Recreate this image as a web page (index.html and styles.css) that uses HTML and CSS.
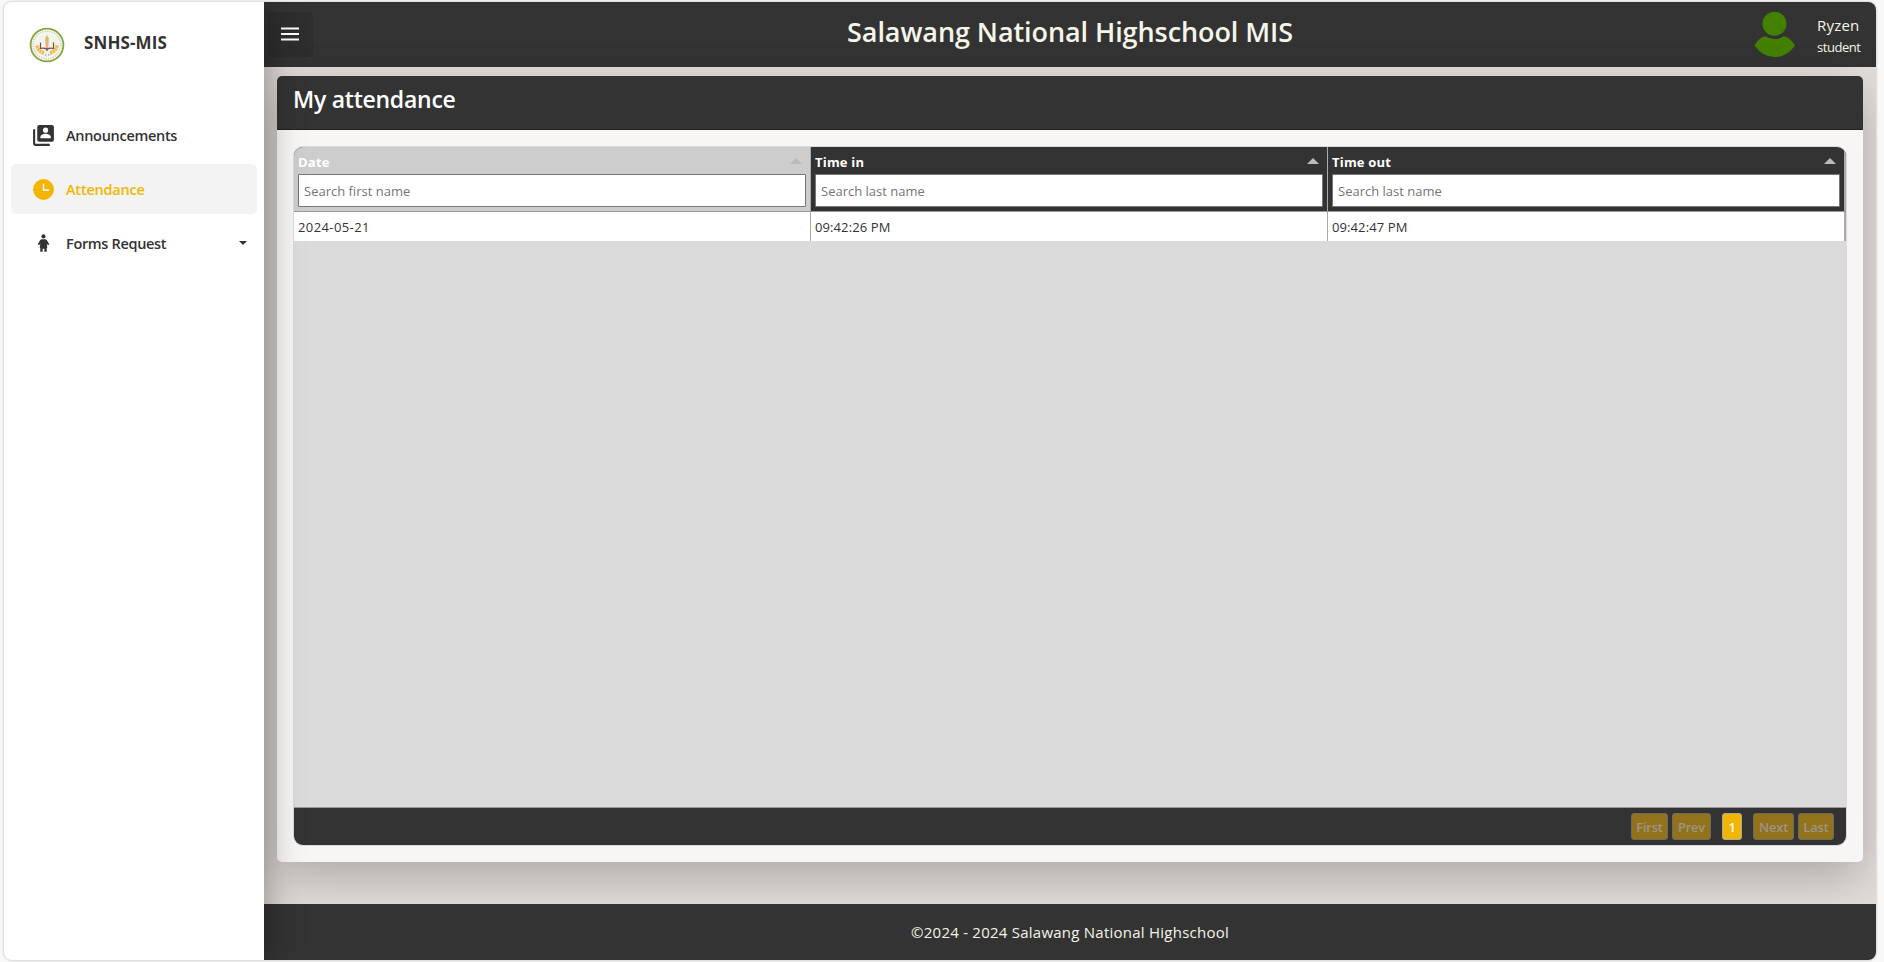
FILE: index.html
```html
<!DOCTYPE html>
<html lang="en">
<head>
<meta charset="utf-8">
<title>SNHS-MIS</title>
<link rel="stylesheet" href="styles.css">
</head>
<body>
<div class="app">
  <aside class="sidebar">
    <div class="brand">
      <svg class="logo" viewBox="0 0 36 36">
        <circle cx="18" cy="18" r="16.4" fill="#fbfbf6" stroke="#83a63b" stroke-width="1.8"/>
        <circle cx="18" cy="18" r="13.8" fill="none" stroke="#cfd2ca" stroke-width="2" stroke-dasharray="1.3 1.1"/>
        <circle cx="18" cy="18" r="12" fill="#f3f4e8"/>
        <path d="M8 18.500q1 6 7 7.500M28 18.500q-1 6-7 7.500" fill="none" stroke="#f3b948" stroke-width="3.600" stroke-dasharray="2.3 .6"/>
        <path d="M11.500 15.500v6q4-1 6.500 1q2.500-2 6.500-1v-6M18 17v7" fill="none" stroke="#6d5154" stroke-width="1.200"/>
        <path d="M18 8l1.800 3-.4 10h-2.800l-.4-10z" fill="#e5b37a"/>
        <path d="M16 28h1.4M19 28h1.4" stroke="#80a080" stroke-width="1"/>
      </svg>
      <span class="brand-name">SNHS-MIS</span>
    </div>
    <nav class="menu">
      <a class="item"><svg class="icon" viewBox="0 0 24 24"><path fill="currentColor" d="M4 6H2v14a2 2 0 0 0 2 2h14v-2H4z"/><rect x="6" y="2" width="16" height="16" rx="2" fill="currentColor"/><circle cx="14" cy="6.900" r="2.500" fill="#fff"/><path fill="#fff" d="M9 14.700v-1.200c0-2 3.300-3.100 5-3.100s5 1.100 5 3.100v1.200z"/></svg><span class="label">Announcements</span></a>
      <a class="item active"><svg class="icon" viewBox="0 0 24 24"><circle cx="12" cy="12" r="10" fill="currentColor"/><path d="M12 6.500V12.600H17.500" fill="none" stroke="#f3f3f3" stroke-width="1.500"/></svg><span class="label">Attendance</span></a>
      <a class="item"><svg class="icon" viewBox="0 0 24 24"><circle cx="12" cy="5.200" r="2" fill="currentColor"/><path fill="currentColor" d="M10.300 7.900h3.400q.9 0 1.400.7l2.500 4.100-1.400.9-1.200-1.500.7 3.900h-.6V20h-2.300v-3h-1.600v3H8.900v-4h-.6l.7-3.900-1.200 1.500-1.400-.9 2.500-4.100q.5-.7 1.400-.7z"/></svg><span class="label l-form">Forms Request</span><i class="caret"></i></a>
    </nav>
  </aside>
  <div class="page">
    <header class="topbar">
      <button class="toggle"><svg viewBox="0 0 18 14"><path d="M0 1.500h18M0 7h18M0 12.500h18" stroke="#fff" stroke-width="2"/></svg></button>
      <h1 class="title">Salawang National Highschool MIS</h1>
      <div class="user">
        <svg class="avatar" viewBox="0 0 42 46"><circle cx="20.500" cy="11.700" r="12" fill="#438000"/><path d="M.5 33.500Q5 25.500 11 24.300Q20.500 29.800 30 24.300Q36 25.500 41 33.500Q33 45 20.500 45Q8.500 45 .5 33.500z" fill="#438000"/></svg>
        <div class="who"><span class="name">Ryzen</span><span class="role">student</span></div>
      </div>
    </header>
    <main class="content">
      <section class="card">
        <div class="card-head"><h2 class="card-title">My attendance</h2></div>
        <div class="card-body">
          <div class="table">
            <div class="thead">
              <div class="th hover"><div class="th-title"><span>Date</span><i class="sort"></i></div><input class="search" placeholder="Search first name"></div>
              <div class="th"><div class="th-title"><span>Time in</span><i class="sort"></i></div><input class="search" placeholder="Search last name"></div>
              <div class="th"><div class="th-title"><span>Time out</span><i class="sort"></i></div><input class="search" placeholder="Search last name"></div>
            </div>
            <div class="tbody">
              <div class="row"><div class="td date">2024-05-21</div><div class="td">09:42:26 PM</div><div class="td">09:42:47 PM</div></div>
            </div>
            <div class="tfoot">
              <button class="pg first">First</button><button class="pg prev">Prev</button><button class="pg current">1</button><button class="pg next">Next</button><button class="pg last">Last</button>
            </div>
          </div>
        </div>
      </section>
    </main>
    <footer class="footer"><span>©2024 - 2024 Salawang National Highschool</span></footer>
  </div>
</div>
</body>
</html>
```
FILE: styles.css
```css
* { box-sizing: border-box; }
body { margin: 0; height: 962px; padding: 2px 8px 2px 4px; background: #f8f8f8; font-family: "Open Sans", "Noto Sans", sans-serif; color: #333; overflow: hidden; }
h1, h2 { margin: 0; }
button { font-family: inherit; border: 0; }
.app { display: flex; height: 958px; border-radius: 8px; overflow: hidden; box-shadow: 0 0 3px rgba(0,0,0,.28); }
.sidebar { width: 260px; flex: none; background: #fff; box-shadow: 0 0 36px rgba(0,0,0,.4); z-index: 2; }
.brand { display: flex; align-items: center; height: 84px; padding-left: 24.5px; }
.logo { width: 36px; height: 36px; margin-top: 1px; }
.brand-name { margin-left: 19.5px; font-size: 17px; font-weight: 700; letter-spacing: .1px; margin-top: -3px; }
.menu { padding: 24px 7px 0; display: flex; flex-direction: column; gap: 4px; }
.item { height: 50px; border-radius: 5px; display: flex; align-items: center; padding-left: 20px; padding-right: 10px; }
.item.active { background: #f3f3f3; color: #f2b600; }
.icon { width: 25px; height: 25px; }
.label { margin-left: 10px; font-size: 14.5px; font-weight: 600; letter-spacing: -.3px; }
.active .label { letter-spacing: -.22px; }
.l-form { letter-spacing: -.33px; }
.caret { margin-left: auto; border: 4px solid transparent; border-top-color: #333; border-bottom: 0; }
.page { flex: 1; display: flex; flex-direction: column; background: #e3ddda; }
.topbar { height: 65px; background: #333; display: flex; align-items: center; color: #f5f5e9; flex: none; }
.toggle { width: 45px; height: 45px; margin-left: 4px; margin-top: -1px; padding: 0; background: #2e2e2e; border-radius: 4px; display: grid; place-items: center; }
.toggle svg { width: 18px; height: 14px; margin-left: -1px; margin-top: -1px; }
.title { flex: 1; text-align: center; font-size: 27px; font-weight: 600; letter-spacing: -.08px; line-height: 36px; margin-top: -5px; padding-left: 73px; }
.user { width: 122px; display: flex; align-items: flex-start; height: 46px; margin-top: 1px; }
.avatar { width: 42px; height: 46px; }
.who { margin-left: 21px; display: flex; flex-direction: column; align-items: flex-start; white-space: nowrap; }
.name { font-size: 15px; line-height: 24px; margin-top: 1px; letter-spacing: .2px; }
.role { font-size: 13px; line-height: 20px; letter-spacing: -.45px; }
.content { flex: 1; padding: 9px 13px 0; }
.card { height: 786px; border-radius: 5px; background: #f7f6f4; box-shadow: 0 16px 48px rgba(0,0,0,.24); overflow: hidden; }
.card-head { height: 54px; background: #333; border-bottom: 1px solid #222; padding: 6px 16px; }
.card-title { font-size: 23px; line-height: 34px; font-weight: 600; letter-spacing: -.25px; color: #fff; }
.card-body { padding: 16px; }
.table { height: 700px; border: 1px solid #dadada; border-radius: 10px; overflow: hidden; display: flex; flex-direction: column; background: #dbdbdb; }
.thead { display: flex; height: 65px; background: #333; border-bottom: 1px solid #999; flex: none; }
.th { width: 517px; padding: 4px; border-right: 1px solid #aaa; }
.th:last-child { width: 518px; border-right-width: 2px; }
.hover { background: #cdcdcd; }
.th-title { height: 23px; display: flex; justify-content: space-between; color: #fff; font-size: 13px; line-height: 23px; font-weight: 700; letter-spacing: .2px; }
.sort { margin: 7px 4px 0 0; width: 0; height: 0; border: 6px solid transparent; border-bottom-color: #bbb; border-top: 0; }
.search { display: block; width: 100%; height: 33px; border: 1px solid #767676; padding: 0 5px; font: 13px "Open Sans", sans-serif; background: #fff; border-radius: 1px; }
.search::placeholder { color: #757575; }
.tbody { flex: 1; }
.row { display: flex; height: 29px; background: #fff; }
.td { width: 517px; border-right: 1px solid #aaa; padding-left: 4px; font-size: 13px; line-height: 30px; letter-spacing: .1px; }
.date { letter-spacing: .4px; }
.td:last-child { width: 518px; border-right-width: 2px; }
.tfoot { height: 38px; flex: none; border-top: 1px solid #999; background: #333; display: flex; justify-content: flex-end; padding: 5px 12px 0 0; }
.pg { height: 27px; border: 1px solid #6f6a61; border-radius: 3px; background: #92721a; color: #9d958a; font-size: 13px; font-weight: 600; letter-spacing: -.2px; padding: 0; text-align: center; margin-left: 4px; }
.first { width: 37px; } .prev { width: 39px; } .next { width: 41px; margin-left: 11px; } .last { width: 36px; }
.current { width: 20px; margin-left: 11px; background: #f2b600; color: #fff; border-color: #aaa; }
.footer { height: 56px; background: #333; color: #f5f5e9; display: grid; place-items: center; font-size: 15px; letter-spacing: .24px; z-index: 1; }
```
